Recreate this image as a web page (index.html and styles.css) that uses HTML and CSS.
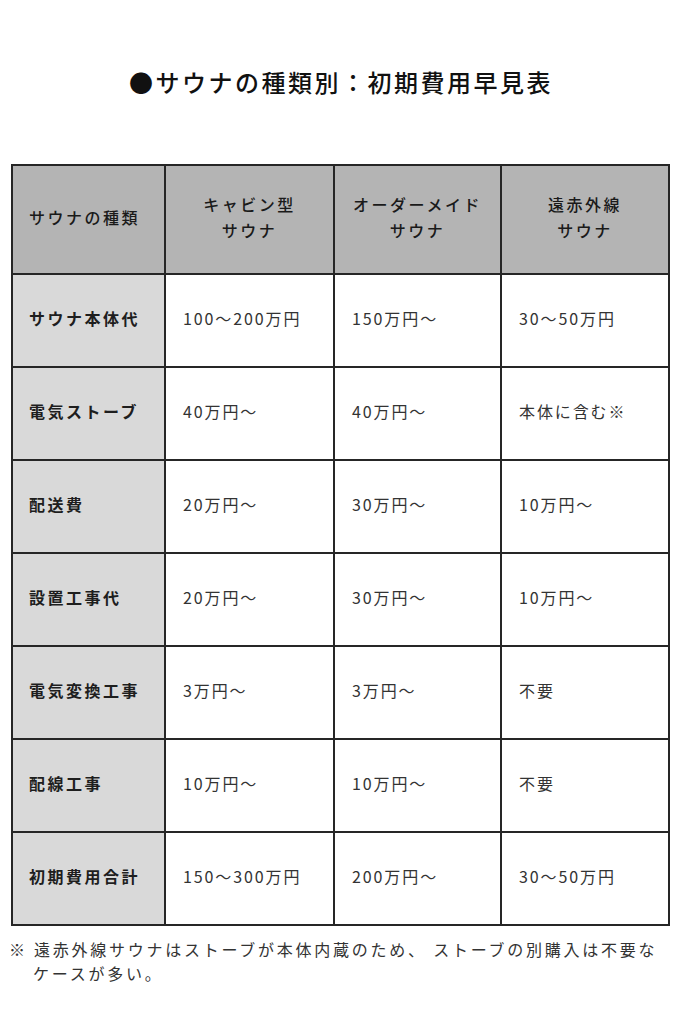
FILE: index.html
```html
<!DOCTYPE html>
<html lang="ja">
<head>
<meta charset="utf-8">
<title>サウナの種類別：初期費用早見表</title>
<link rel="stylesheet" href="styles.css">
</head>
<body>
<main class="page">
  <h1 class="title">●サウナの種類別：初期費用早見表</h1>
  <div class="grid" role="table">
    <div class="cell head label" role="columnheader">サウナの種類</div>
    <div class="cell head" role="columnheader">キャビン型<br>サウナ</div>
    <div class="cell head" role="columnheader">オーダーメイド<br>サウナ</div>
    <div class="cell head" role="columnheader">遠赤外線<br>サウナ</div>

    <div class="cell side" role="rowheader">サウナ本体代</div>
    <div class="cell data">100～200万円</div>
    <div class="cell data">150万円～</div>
    <div class="cell data">30～50万円</div>

    <div class="cell side" role="rowheader">電気ストーブ</div>
    <div class="cell data">40万円～</div>
    <div class="cell data">40万円～</div>
    <div class="cell data">本体に含む※</div>

    <div class="cell side" role="rowheader">配送費</div>
    <div class="cell data">20万円～</div>
    <div class="cell data">30万円～</div>
    <div class="cell data">10万円～</div>

    <div class="cell side" role="rowheader">設置工事代</div>
    <div class="cell data">20万円～</div>
    <div class="cell data">30万円～</div>
    <div class="cell data">10万円～</div>

    <div class="cell side" role="rowheader">電気変換工事</div>
    <div class="cell data">3万円～</div>
    <div class="cell data">3万円～</div>
    <div class="cell data">不要</div>

    <div class="cell side" role="rowheader">配線工事</div>
    <div class="cell data">10万円～</div>
    <div class="cell data">10万円～</div>
    <div class="cell data">不要</div>

    <div class="cell side" role="rowheader">初期費用合計</div>
    <div class="cell data">150～300万円</div>
    <div class="cell data">200万円～</div>
    <div class="cell data">30～50万円</div>
  </div>
  <p class="note">※ 遠赤外線サウナはストーブが本体内蔵のため、 ストーブの別購入は不要な<br>ケースが多い。</p>
</main>
</body>
</html>
```

FILE: styles.css
```css
* { box-sizing: border-box; }

html, body {
  margin: 0;
  padding: 0;
  background: #ffffff;
}

body {
  font-family: "Noto Sans CJK JP", "Noto Sans", sans-serif;
  color: #222222;
}

.page {
  width: 682px;
  padding-top: 65px;
}

.title {
  margin: 0;
  height: 34px;
  line-height: 34px;
  font-size: 24px;
  font-weight: 500;
  letter-spacing: 2.5px;
  text-align: center;
  color: #111111;
}

.grid {
  margin: 65px 0 0 11px;
  width: 659px;
  display: grid;
  grid-template-columns: 151px 167px 165px 166px;
  grid-template-rows: 107px repeat(7, 91px);
  gap: 2px;
  padding: 2px;
  background: #262626;
}

.cell {
  display: flex;
  align-items: center;
  font-size: 16px;
  letter-spacing: 2.5px;
  line-height: 26px;
  background: #ffffff;
  padding-bottom: 6px;
}

.head {
  background: #b4b4b4;
  justify-content: center;
  text-align: center;
  font-weight: 500;
  color: #1a1a1a;
}

.head.label {
  justify-content: flex-start;
  text-align: left;
  padding-left: 16px;
}

.side {
  background: #d9d9d9;
  padding-left: 16px;
  font-weight: 700;
  color: #1e1e1e;
}

.data {
  padding-left: 17px;
  color: #333333;
  font-weight: 400;
  letter-spacing: 1.9px;
}

.note {
  margin: 11px 0 0 0;
  padding-left: 33px;
  text-indent: -24px;
  font-size: 16px;
  line-height: 24px;
  letter-spacing: 2.75px;
  color: #333333;
}
```
